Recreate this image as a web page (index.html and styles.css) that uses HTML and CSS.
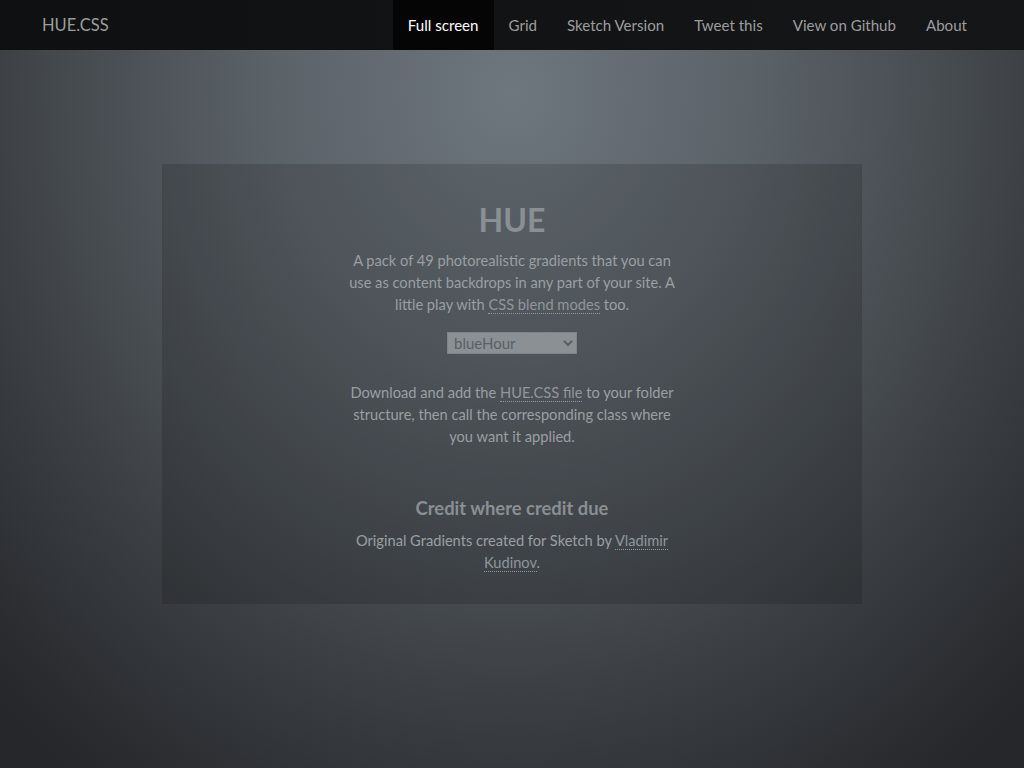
FILE: index.html
```html
<!DOCTYPE html>
<html>
<head>
<meta charset="utf-8">
<title>HUE.CSS</title>
<link rel="stylesheet" href="styles.css">
</head>
<body>
<nav class="navbar">
  <div class="container nav-inner">
    <a class="brand" href="#">HUE.CSS</a>
    <ul class="nav">
      <li class="active"><a href="#">Full screen</a></li>
      <li><a href="#">Grid</a></li>
      <li><a href="#">Sketch Version</a></li>
      <li><a href="#">Tweet this</a></li>
      <li><a href="#">View on Github</a></li>
      <li><a href="#">About</a></li>
    </ul>
  </div>
</nav>
<main class="main">
  <section class="card">
    <h1 class="title">HUE</h1>
    <p class="text">A pack of 49 photorealistic gradients that you can use as content backdrops in any part of your site. A little play with <a href="#">CSS blend modes</a> too.</p>
    <div class="select-wrap">
      <select class="picker">
        <option>blueHour</option>
      </select>
    </div>
    <p class="text">Download and add the <a href="#">HUE.CSS file</a> to your folder structure, then call the corresponding class where you want it applied.</p>
    <h2 class="subtitle">Credit where credit due</h2>
    <p class="text">Original Gradients created for Sketch by <a href="#">Vladimir Kudinov</a>.</p>
  </section>
</main>
</body>
</html>
```
FILE: styles.css
```css
html, body {
  margin: 0;
  padding: 0;
  height: 100%;
}
body {
  font-family: "Lato", "Noto Sans", sans-serif;
  background: radial-gradient(ellipse 72% 110% at 50% 12%, #6e777e 0%, #5b6268 32%, #474c51 58%, #313438 84%, #25272a 100%);
  background-color: #25272a;
  min-height: 768px;
  color: #9a9fa3;
}
.container {
  width: 970px;
  margin: 0 auto;
  padding-right: 15px;
  box-sizing: border-box;
}
.navbar {
  height: 50px;
  background: linear-gradient(90deg, #0f1011, #151618);
}
.nav-inner {
  display: flex;
  justify-content: space-between;
  align-items: stretch;
  height: 50px;
}
.brand {
  padding: 0 15px;
  line-height: 50px;
  font-size: 16.5px;
  color: #9d9d9d;
  text-decoration: none;
}
.nav {
  list-style: none;
  margin: 0;
  padding: 0;
  display: flex;
}
.nav li a {
  display: block;
  padding: 0 15px;
  line-height: 50px;
  font-size: 15.1px;
  color: #9d9d9d;
  text-decoration: none;
}
.nav li.active a {
  color: #fff;
  background: #050505;
}
.main {
  display: flex;
  justify-content: center;
  padding-top: 114px;
}
.card {
  width: 700px;
  height: 440px;
  box-sizing: border-box;
  background: rgba(0, 0, 0, 0.14);
  text-align: center;
  padding-top: 34px;
}
.title {
  margin: 0 0 8px;
  font-size: 32px;
  line-height: 44px;
  font-weight: 700;
  color: #8a8f94;
}
.text {
  width: 340px;
  margin: 0 auto;
  font-size: 14.65px;
  line-height: 22px;
  color: #9a9fa3;
}
.text a {
  color: #8f969c;
  text-decoration: none;
  border-bottom: 1px dotted #8f969c;
}
.select-wrap {
  margin: 16px 0 28px;
}
.picker {
  width: 130px;
  height: 22px;
  font-family: inherit;
  font-size: 15px;
  background: #8b9095;
  color: #5a5f64;
  border: 1px solid #7e8388;
  padding: 0 2px;
}
.subtitle {
  margin: 48px 0 10px;
  font-size: 18.4px;
  line-height: 24px;
  font-weight: 700;
  color: #8a8f94;
}
```
